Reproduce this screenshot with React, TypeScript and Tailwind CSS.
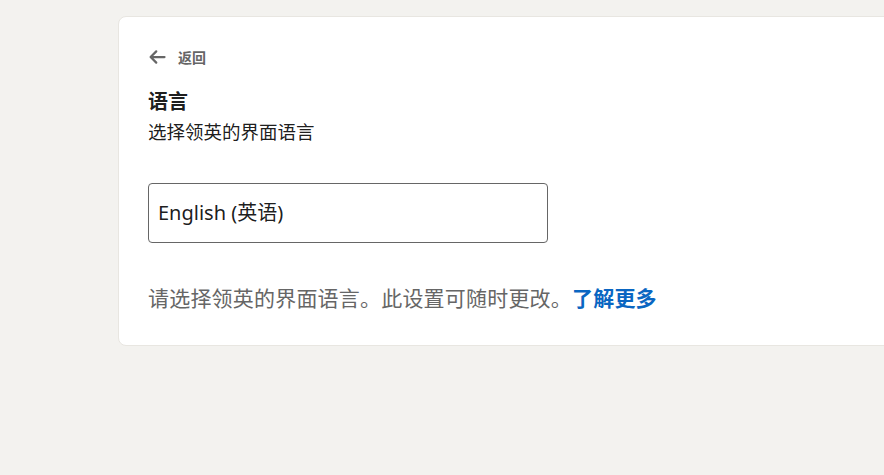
export default function App() {
  return (
    <div
      className="min-h-screen w-full overflow-hidden bg-[#f3f2ef] pt-4 pl-[118px]"
      style={{ fontFamily: '"Noto Sans", "Noto Sans CJK SC", sans-serif' }}
    >
      <div className="w-[800px] rounded-lg border border-[#e8e6e1] bg-white px-[29px] pt-[28px] pb-[33px]">
        {/* back link */}
        <button className="flex h-6 items-center gap-[12px] text-[#666666]">
          <svg className="h-[18px] w-[18px]" viewBox="0 0 24 24" fill="none" stroke="currentColor" strokeWidth={3} strokeLinecap="round" strokeLinejoin="round">
            <path d="M22 12H3.5m0 0l7.5-7.5M3.5 12l7.5 7.5" />
          </svg>
          <span className="text-[14px] font-bold">返回</span>
        </button>

        <h1 className="mt-[21px] text-[20px] font-bold leading-6 text-black/90">语言</h1>
        <p className="mt-[6px] text-[18.5px] leading-6 text-black/90">选择领英的界面语言</p>

        <div className="mt-[39px] flex h-[60px] w-[400px] items-center rounded border border-[#666666] px-[9px]">
          <span className="text-[20px] text-black/90">English (英语)</span>
        </div>

        <p className="mt-[41px] text-[21px] leading-7 tracking-[0.2px] text-[#666666]">
          请选择领英的界面语言。此设置可随时更改。
          <a href="#" className="font-bold text-[#0a66c2]">了解更多</a>
        </p>
      </div>
    </div>
  )
}
